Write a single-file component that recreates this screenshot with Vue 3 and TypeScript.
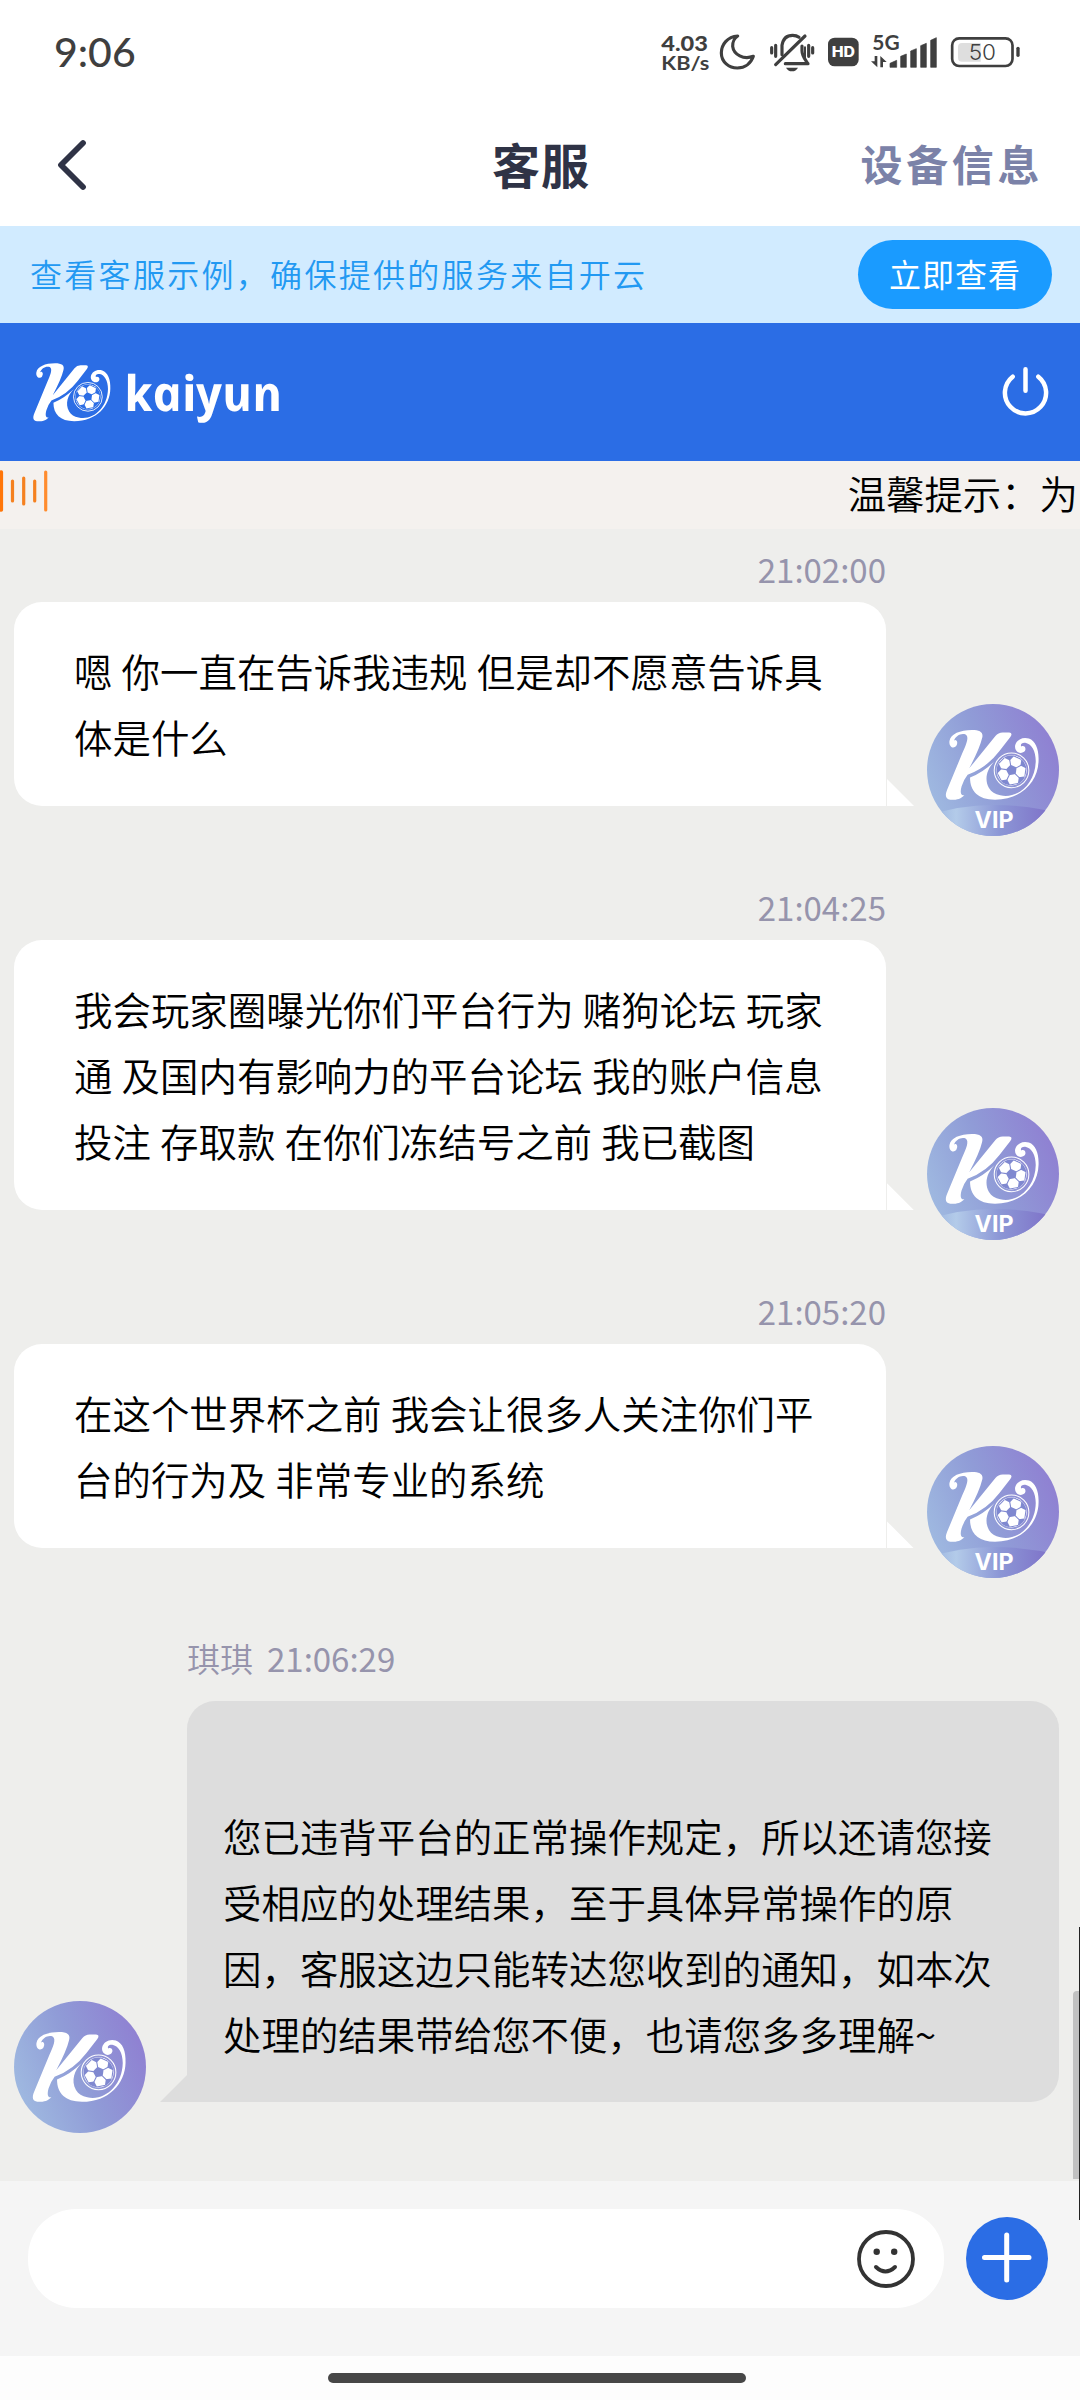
<script setup lang="ts">
interface Message {
  from: 'user' | 'agent'
  name?: string
  time: string
  lines: string[]
}

const messages: Message[] = [
  {
    from: 'user',
    time: '21:02:00',
    lines: ['嗯 你一直在告诉我违规 但是却不愿意告诉具', '体是什么'],
  },
  {
    from: 'user',
    time: '21:04:25',
    lines: [
      '我会玩家圈曝光你们平台行为 赌狗论坛 玩家',
      '通 及国内有影响力的平台论坛 我的账户信息',
      '投注 存取款 在你们冻结号之前 我已截图',
    ],
  },
  {
    from: 'user',
    time: '21:05:20',
    lines: ['在这个世界杯之前 我会让很多人关注你们平', '台的行为及 非常专业的系统'],
  },
  {
    from: 'agent',
    name: '琪琪',
    time: '21:06:29',
    lines: [
      '',
      '您已违背平台的正常操作规定，所以还请您接',
      '受相应的处理结果，至于具体异常操作的原',
      '因，客服这边只能转达您收到的通知，如本次',
      '处理的结果带给您不便，也请您多多理解~',
    ],
  },
]

// Football patches and seams, spread evenly around the ball centre
const patchAngles = [0, 72, 144, 216, 288]
</script>

<template>
  <div class="screen">
    <svg class="defs" width="0" height="0" aria-hidden="true">
      <defs>
        <linearGradient id="disc" x1="0" y1="0.75" x2="1" y2="0.35">
          <stop offset="0" stop-color="#a0bbe1" />
          <stop offset="0.5" stop-color="#909cd7" />
          <stop offset="1" stop-color="#8f80d2" />
        </linearGradient>
        <linearGradient id="band" x1="0" y1="0" x2="1" y2="0">
          <stop offset="0.05" stop-color="#9db5e0" />
          <stop offset="0.22" stop-color="#b3cbe9" />
          <stop offset="0.55" stop-color="#8c97d6" />
          <stop offset="1" stop-color="#7c6bc6" />
        </linearGradient>
        <clipPath id="round"><circle cx="66" cy="66" r="66" /></clipPath>
        <clipPath id="ballclip"><circle cx="190" cy="140" r="37" /></clipPath>
        <symbol id="mark" viewBox="20 30 245 190">
          <path
            fill="#fff"
            d="M53 79C45 89 34 80 36 67C39 50 62 40 92 40C112 40 121 46 117 60Q111 86 85 135L150 55Q157 46 168 46L184 46Q194 47 187 57L160 92Q128 134 81 151Q72 162 66 180C61 198 66 204 73 201C65 212 49 214 38 213C27 212 24 203 30 189L68 97C77 77 86 57 76 51C64 47 51 55 47 67C49 62 60 66 53 79Z"
          />
          <path
            fill="#fff"
            d="M87 158Q121 144 148 117C130 136 121 160 134 184C140 194 149 199 162 202C205 212 249 173 250 117C250 91 239 75 226 72C216 70 211 76 214 81C222 76 229 87 221 94C211 102 196 92 199 78C202 64 218 56 233 61C250 67 258 88 257 116C256 167 216 213 149 213C107 213 87 192 87 158Z"
          />
          <circle cx="190" cy="140" r="43" fill="none" stroke="#fff" stroke-width="2.6" />
          <circle cx="190" cy="140" r="37.5" fill="#fff" />
          <g clip-path="url(#ballclip)">
            <path d="M190 126L203.500 135.500L198.500 151L181.500 151L176.500 135.500Z" fill="currentColor" transform="rotate(-10 190 140)" />
            <g v-for="a in patchAngles" :key="a" :transform="`rotate(${a - 10} 190 140)`">
              <path d="M190 127V112" stroke="currentColor" stroke-width="2.600" />
              <path d="M175 98L179 107L190 115L201 107L205 98Z" fill="currentColor" />
              <path d="M201 105L219 118" stroke="currentColor" stroke-width="2.600" />
            </g>
          </g>
        </symbol>
      </defs>
    </svg>

    <div class="status">
      <span class="clock">9:06</span>
      <svg class="status-icons" width="400" height="70" viewBox="0 0 1200 210">
        <g fill="#3f3f3f" font-family="Lato, sans-serif">
          <text x="64" y="94" font-size="61" font-weight="900" textLength="140" lengthAdjust="spacingAndGlyphs">4.03</text>
          <text x="64" y="151" font-size="57" font-weight="700" textLength="144" lengthAdjust="spacingAndGlyphs">KB/s</text>
          <text x="697" y="90" font-size="62" font-weight="700" textLength="82" lengthAdjust="spacingAndGlyphs">5G</text>
        </g>
        <path d="M293 48C262 50 244 74 244 99C244 126 267 144 292 144C315 144 333 130 340 109C311 120 281 104 278 79C277 67 284 54 293 48Z" fill="none" stroke="#3f3f3f" stroke-width="9.500" stroke-linejoin="round" />
        <g fill="none" stroke="#3f3f3f" stroke-width="9.500" stroke-linecap="round">
          <path d="M495 48L407 134M395 83V99M407 76V109M506 76V109M518 83V99" />
          <path d="M426 104V76C429 56 441 46 458 46C466 46 472 48 477 52M436 131H504M486 78V92C486 108 496 118 503 130" />
          <path d="M495 82V116" stroke-width="6" />
        </g>
        <path d="M438 143H474Q468 154 456 154Q444 154 438 143Z" fill="#3f3f3f" />
        <rect x="564" y="53" width="92" height="86" rx="20" fill="#3f3f3f" />
        <text x="575" y="111" font-family="Inter, sans-serif" font-size="42" font-weight="800" fill="#fff" textLength="70" lengthAdjust="spacingAndGlyphs">HD</text>
        <path d="M704 108H712V142L693 124H704ZM721 142V108L740 126H729V142Z" fill="#3f3f3f" />
        <path d="M750 142V130L770 121V142ZM782 142V109L799 102V142ZM812 142V93L829 86V142ZM842 142V77L859 70V142ZM872 142V61L889 53V142Z" fill="#3f3f3f" stroke="#3f3f3f" stroke-width="2" stroke-linejoin="round" />
        <rect x="936.500" y="55" width="181" height="83" rx="21" fill="none" stroke="#3f3f3f" stroke-width="8" />
        <path d="M966 69H1022V125H966Q954 125 954 113V81Q954 69 966 69Z" fill="#dedede" />
        <rect x="1129" y="80" width="10" height="31" rx="5" fill="#3f3f3f" />
        <text x="986" y="121" font-family="Inter, sans-serif" font-size="66" fill="#3f3f3f" textLength="82" lengthAdjust="spacingAndGlyphs">50</text>
      </svg>
    </div>

    <header class="titlebar">
      <svg class="back" width="34" height="54" viewBox="0 0 34 54">
        <path d="M29 5L7 27L29 49" fill="none" stroke="#2f3346" stroke-width="5.800" stroke-linecap="round" stroke-linejoin="round" />
      </svg>
      <h1>客服</h1>
      <span class="device">设备信息</span>
    </header>

    <div class="banner">
      <span>查看客服示例，确保提供的服务来自开云</span>
      <button type="button">立即查看</button>
    </div>

    <div class="brand">
      <svg class="logo" width="82" height="63.600"><use href="#mark" /></svg>
      <svg class="wordmark" width="190" height="110" viewBox="0 0 190 110">
        <text transform="translate(2 61) skewX(12)" textLength="158" lengthAdjust="spacingAndGlyphs">kaiyun</text>
      </svg>
      <svg class="power" width="54" height="54" viewBox="0 0 54 54">
        <path d="M26.500 4.300V25.700M13.700 11.700A20.600 20.600 0 1 0 39.300 11.700" fill="none" stroke="#fff" stroke-width="4.500" stroke-linecap="round" />
      </svg>
    </div>

    <div class="notice">
      <svg width="48" height="42" viewBox="0 0 48 42">
        <g stroke="#f5811f" stroke-width="3.200" stroke-linecap="round">
          <path d="M1.300 2V40" stroke="#ff7608" stroke-width="3.600" />
          <path d="M12.500 11V31M23.700 8V34M34.700 11V31" />
          <path d="M45.700 2V40" stroke="#ff8c2e" />
        </g>
      </svg>
      <span>温馨提示：为</span>
    </div>

    <main class="chat">
      <section v-for="m in messages" :key="m.time" class="message" :class="m.from">
        <div class="meta"><span v-if="m.name" class="name">{{ m.name }}</span>{{ m.time }}</div>
        <div class="row">
          <div class="bubble">
            <p v-for="(line, i) in m.lines" :key="i">{{ line }}</p>
          </div>
          <svg class="avatar" width="132" height="132" viewBox="0 0 132 132">
            <circle cx="66" cy="66" r="66" fill="url(#disc)" />
            <use href="#mark" x="16" :y="m.from === 'user' ? 22 : 27" width="98.800" height="76.600" />
            <g v-if="m.from === 'user'" clip-path="url(#round)">
              <path d="M0 112Q32 101 66 101Q100 101 132 109V132H0Z" fill="url(#band)" />
              <text x="47.500" y="124.300" textLength="39" lengthAdjust="spacingAndGlyphs">VIP</text>
            </g>
          </svg>
        </div>
      </section>
      <i class="scrollbar"></i>
      <i class="edge"></i>
    </main>

    <footer class="composer">
      <div class="field">
        <svg width="58" height="58" viewBox="0 0 58 58">
          <circle cx="29" cy="29" r="27" fill="none" stroke="#333" stroke-width="3.800" />
          <circle cx="19.700" cy="21.700" r="3.200" fill="#333" />
          <circle cx="37.200" cy="21.700" r="3.200" fill="#333" />
          <path d="M19 37Q28.500 46 38 37" fill="none" stroke="#333" stroke-width="4" stroke-linecap="round" />
        </svg>
      </div>
      <svg class="plus" width="82" height="83" viewBox="0 0 82 83">
        <ellipse cx="41" cy="41.500" rx="41" ry="41.500" fill="#2b6de5" />
        <path d="M18.500 40.500H63M40.700 18V63" stroke="#fff" stroke-width="5" stroke-linecap="round" />
      </svg>
    </footer>
    <div class="navbar"><i></i></div>
  </div>
</template>

<style>
body {
  margin: 0;
  background: #fff;
}
</style>

<style scoped>
.screen {
  display: flex;
  flex-direction: column;
  width: 1080px;
  height: 2400px;
  overflow: hidden;
  background: #fff;
  font-family: 'Noto Sans CJK SC', sans-serif;
  font-weight: 350;
}
.defs {
  position: absolute;
}
svg {
  display: block;
  flex: none;
}
.status {
  display: flex;
  justify-content: space-between;
  height: 104px;
  padding: 20px 40px 0 54px;
  box-sizing: border-box;
}
.clock {
  color: #3f3f3f;
  font: 500 41px/64px Lato, sans-serif;
}
.titlebar {
  display: grid;
  grid-template-columns: 1fr auto 1fr;
  align-items: center;
  height: 122px;
  padding: 0 39px 0 54px;
}
.titlebar h1 {
  margin: -5px 13px 0 0;
  color: #2f3346;
  font-size: 48px;
  line-height: 70px;
  letter-spacing: 1px;
}
.device {
  justify-self: end;
  margin: -5px -2px 0 0;
  color: #7b82a8;
  font-size: 42px;
  font-weight: 700;
  letter-spacing: 3.6px;
}
.banner {
  display: flex;
  align-items: center;
  justify-content: space-between;
  height: 97px;
  padding: 0 28px 0 30px;
  background: #d1ebff;
  color: #2299f2;
  font-size: 32px;
  letter-spacing: 2.3px;
}
.banner span {
  margin-top: -4px;
}
.banner button {
  width: 194px;
  height: 69px;
  padding: 0 0 2px;
  border: 0;
  border-radius: 35px;
  background: #1a9bff;
  color: #fff;
  font: 400 32px/67px 'Noto Sans CJK SC', sans-serif;
  letter-spacing: 1px;
}
.brand {
  display: flex;
  align-items: flex-start;
  height: 138px;
  padding: 0 27px 0 31px;
  box-sizing: border-box;
  background: #2b6de5;
  color: #2b6de5;
}
.logo {
  margin-top: 37px;
}
.wordmark {
  margin: 27px 0 0 12px;
}
.wordmark text {
  fill: #fff;
  font: italic 700 49px 'Open Sans', sans-serif;
}
.power {
  margin: 42px 0 0 auto;
}
.notice {
  display: flex;
  justify-content: space-between;
  height: 68px;
  overflow: hidden;
  background: #f4f1ee;
  color: #000;
  font-size: 38.4px;
  line-height: 63px;
}
.notice svg {
  margin-top: 9px;
}
.notice span {
  margin-right: 2px;
}
.chat {
  position: relative;
  height: 1652px;
  background: #eeeeec;
}
.message {
  margin-bottom: 61.2px;
}
.meta {
  height: 73px;
  padding-top: 8px;
  box-sizing: border-box;
  color: #9694ac;
  font-size: 33px;
  font-weight: 400;
  line-height: 64px;
}
.row {
  display: flex;
  align-items: flex-end;
  justify-content: space-between;
  padding: 0 21px 0 14px;
}
.bubble {
  position: relative;
  width: 872px;
  padding: 35px 0 37px 60px;
  box-sizing: border-box;
  border-radius: 28px 28px 0 28px;
  background: #fff;
}
.bubble::after {
  position: absolute;
  bottom: 0;
  left: 873px;
  width: 27px;
  height: 27px;
  background: #fff;
  clip-path: polygon(0 0, 100% 100%, 0 100%);
  content: '';
}
.bubble p {
  min-height: 66px;
  margin: 0;
  color: #000;
  font-size: 38.45px;
  line-height: 66px;
  word-spacing: 0.6px;
  white-space: pre;
}
.user .meta {
  padding-right: 194px;
  text-align: right;
}
.avatar {
  margin-bottom: -30px;
  color: #7f88d0;
}
.avatar text {
  fill: #fff;
  font: 700 22.5px Inter, sans-serif;
}
.agent {
  padding-top: 8.5px;
}
.agent .meta {
  height: 83px;
  padding-left: 187px;
}
.name {
  margin-right: 14px;
  font-weight: 350;
}
.agent .row {
  flex-direction: row-reverse;
}
.agent .bubble {
  padding: 35px 0 36px 36px;
  border-radius: 28px 28px 28px 0;
  background: #ddd;
}
.agent .bubble::after {
  left: -27px;
  background: #ddd;
  clip-path: polygon(100% 0, 100% 100%, 0 100%);
}
.agent .avatar {
  margin-bottom: -31px;
}
.scrollbar {
  position: absolute;
  top: 1462px;
  right: 0;
  width: 7px;
  height: 188px;
  border-radius: 4px 0 0 0;
  background: #c1c1c1;
}
.edge {
  position: absolute;
  z-index: 1;
  top: 1398px;
  right: 0;
  width: 1px;
  height: 293px;
  background: #222;
}
.composer {
  display: flex;
  align-items: flex-start;
  height: 175px;
  padding: 28px 32px 0 28px;
  box-sizing: border-box;
  background: #f5f5f5;
}
.field {
  display: flex;
  align-items: center;
  justify-content: flex-end;
  width: 916px;
  height: 99px;
  padding-right: 29px;
  box-sizing: border-box;
  border-radius: 48px;
  background: #fff;
}
.plus {
  margin: 8px 0 0 22px;
}
.navbar {
  display: flex;
  justify-content: center;
  height: 44px;
  background: #fdfdfd;
}
.navbar i {
  width: 418px;
  height: 10px;
  margin: 17px 6px 0 0;
  border-radius: 5px;
  background: #474747;
}
</style>
